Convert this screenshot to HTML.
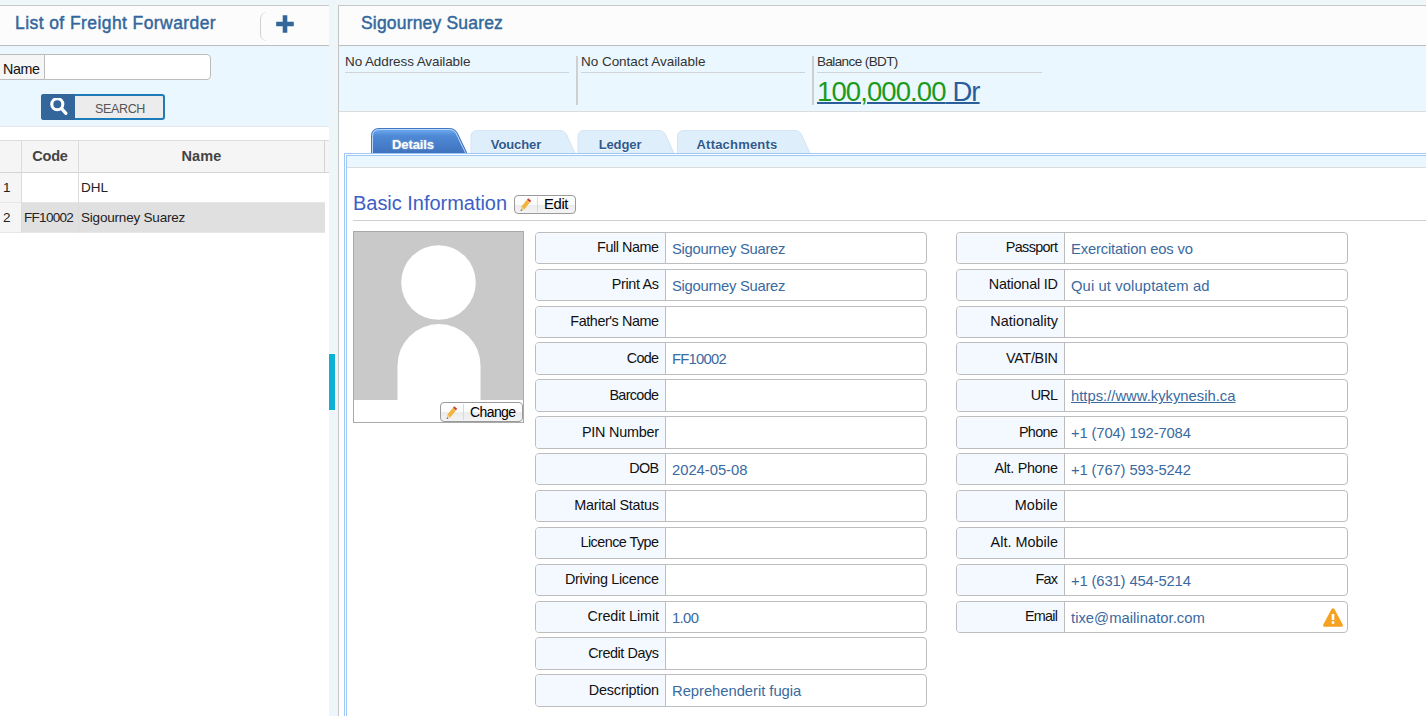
<!DOCTYPE html>
<html>
<head>
<meta charset="utf-8">
<title>Freight Forwarder</title>
<style>
*{box-sizing:border-box;margin:0;padding:0}
html,body{width:1426px;height:716px;overflow:hidden;background:#eff6fa;font-family:"Liberation Sans",sans-serif;font-size:14px;color:#222}
.abs{position:absolute}
#left{position:absolute;left:0;top:5px;width:329px;height:711px;background:#fff;border-top:1px solid #c8c8c8}
#right{position:absolute;left:338px;top:5px;width:1100px;height:711px;background:#fff;border-top:1px solid #c8c8c8;border-left:1px solid #c4c4c4}
.hdr{position:absolute;left:0;top:0;right:0;height:40px;border-bottom:1px solid #bdbdbd;background:#fcfcfc}
.title{position:absolute;color:#33679b;font-size:17.5px;white-space:nowrap;-webkit-text-stroke:0.45px #33679b;letter-spacing:0.42px}
.blue{position:absolute;left:0;right:0;background:#ebf7fe}
.t{position:absolute;white-space:nowrap;line-height:1}
.th{text-align:center;font-weight:bold;font-size:14.5px;letter-spacing:-0.2px;color:#444}
.td{font-size:13.5px;color:#222}
.row{position:absolute;border:1px solid #bdbdbd;border-radius:4px;background:#fff;overflow:hidden}
.lab{position:absolute;left:0;top:0;bottom:0;background:#f4f9ff;border-right:1px solid #bdbdbd;display:flex;align-items:center;justify-content:flex-end;padding-right:6px;padding-bottom:1.400px;font-size:14.4px;letter-spacing:-0.3px;line-height:normal;color:#111;white-space:nowrap}
.val{position:absolute;top:0;bottom:0;display:flex;align-items:center;padding-top:1.900px;font-size:14.800px;letter-spacing:-0.27px;line-height:normal;color:#3a6a9f;white-space:nowrap}
.url{text-decoration:underline}
.btn{position:absolute;border:1px solid #9a9a9a;border-radius:4px;background:linear-gradient(#ffffff 0%,#fbfbfb 50%,#ececec 52%,#f3f3f3 100%)}
.inf{font-size:13.5px;color:#333}
.tab{font-size:13px;font-weight:bold;color:#2e5a8e;text-align:center;letter-spacing:-0.1px;text-shadow:0 1px 0 #fff}
</style>
</head>
<body>

<!-- LEFT PANEL -->
<div id="left">
  <div class="hdr">
    <div class="title" style="left:15px;top:7px">List of Freight Forwarder</div>
    <div class="abs" style="left:260px;top:6px;width:60px;height:29px;border-left:1px solid #d0d0d0;border-radius:7px 0 0 7px"></div>
    <svg class="abs" style="left:275px;top:8px" width="20" height="20" viewBox="0 0 20 20"><path d="M7.700 1.200h4.600v6.500h6.500v4.600h-6.500v6.500H7.700v-6.500H1.200V7.700h6.500z" fill="#33679b"/></svg>
  </div>
  <div class="blue" style="top:40px;height:81px;border-bottom:1px solid #e3e9ee"></div>
  <div class="abs" style="left:-1px;top:48px;width:46px;height:26px;background:#f6f6f6;border:1px solid #bcbcbc"></div>
  <div class="t" style="left:3px;top:56px;font-size:14.300px;letter-spacing:-0.4px;color:#111">Name</div>
  <div class="abs" style="left:44px;top:48px;width:167px;height:26px;background:#fff;border:1px solid #bcbcbc;border-radius:0 4px 4px 0"></div>
  <!-- search button -->
  <div class="abs" style="left:41px;top:88px;width:124px;height:26px;background:#ececec;border:2px solid #1d7cb8;border-radius:3px"></div>
  <div class="abs" style="left:41px;top:88px;width:34px;height:26px;background:#33679b;border-radius:3px 0 0 3px"></div>
  <svg class="abs" style="left:49px;top:92px" width="20" height="20" viewBox="0 0 20 20"><circle cx="8.300" cy="6.200" r="5.500" fill="none" stroke="#fff" stroke-width="3.100"/><path d="M12.600 10.600l4.300 4.700" stroke="#fff" stroke-width="3.300" stroke-linecap="round"/></svg>
  <div class="t" style="left:95px;top:97px;font-size:12.5px;color:#555;letter-spacing:-0.35px">SEARCH</div>

  <!-- table -->
  <div class="abs" style="left:0;top:134px;width:329px;height:33px;background:#f5f5f5;border-top:1px solid #dcdcdc;border-bottom:1px solid #d4d4d4"></div>
  <div class="abs" style="left:0;top:167px;width:22px;height:60px;background:#f5f5f5"></div>
  <div class="abs" style="left:22px;top:197px;width:303px;height:30px;background:#e0e0e0"></div>
  <div class="abs" style="left:0;top:196px;width:325px;height:1px;background:#e6e6e6"></div>
  <div class="abs" style="left:0;top:226px;width:325px;height:1px;background:#e6e6e6"></div>
  <div class="abs" style="left:21px;top:135px;width:1px;height:92px;background:#dcdcdc"></div>
  <div class="abs" style="left:78px;top:135px;width:1px;height:92px;background:#dcdcdc"></div>
  <div class="abs" style="left:324px;top:135px;width:1px;height:32px;background:#d4d4d4"></div>
  <div class="t th" style="left:22px;width:56px;top:143px">Code</div>
  <div class="t th" style="left:79px;width:245px;top:143px;letter-spacing:0.15px">Name</div>
  <div class="t td" style="left:3px;top:175px">1</div>
  <div class="t td" style="left:81px;top:175px">DHL</div>
  <div class="t td" style="left:3px;top:205px">2</div>
  <div class="t td" style="left:24px;top:205px;letter-spacing:-0.7px">FF10002</div>
  <div class="t td" style="left:81px;top:205px;letter-spacing:-0.2px">Sigourney Suarez</div>
</div>

<!-- RIGHT PANEL -->
<div id="right">
  <div class="hdr">
    <div class="title" style="left:22px;top:7px;letter-spacing:0.18px">Sigourney Suarez</div>
  </div>
  <div class="blue" style="top:40px;height:66px;border-bottom:1px solid #dcdcdc"></div>

  <!-- info strip (coords relative to #right: x-339, y-6) -->
  <div class="t inf" style="left:6px;top:49px;letter-spacing:-0.1px">No Address Available</div>
  <div class="abs" style="left:6px;top:66px;width:224px;height:1px;background:#cfd4d8"></div>
  <div class="abs" style="left:237px;top:50px;width:2px;height:49px;background:#cfcfcf"></div>
  <div class="t inf" style="left:242px;top:49px;letter-spacing:-0.03px">No Contact Available</div>
  <div class="abs" style="left:242px;top:66px;width:224px;height:1px;background:#cfd4d8"></div>
  <div class="abs" style="left:473px;top:50px;width:2px;height:49px;background:#cfcfcf"></div>
  <div class="t inf" style="left:478px;top:49px;letter-spacing:-0.6px">Balance (BDT)</div>
  <div class="abs" style="left:478px;top:66px;width:225px;height:1px;background:#cfd4d8"></div>
  <div class="t" style="left:478px;top:72px;font-size:27.5px;color:#2a5d9c;text-decoration:underline;text-decoration-thickness:1.600px;text-underline-offset:1px;letter-spacing:-0.9px"><span style="color:#1c9a1c">100,000.00</span> Dr</div>

  <!-- tabs -->
  <svg class="abs" style="left:30px;top:118px" width="450" height="32" viewBox="0 0 450 32">
    <defs>
      <linearGradient id="ga" x1="0" y1="0" x2="0" y2="1"><stop offset="0" stop-color="#72aef2"/><stop offset="0.3" stop-color="#4f89d6"/><stop offset="1" stop-color="#3f72bd"/></linearGradient>
    </defs>
    <!-- inactive tabs -->
    <path d="M102 29.500V13q0-6.500 6.500-6.500H190.500q5 0 7.300 4.500l8.200 18.500z" fill="#dfeefb" stroke="#d3e4f4" stroke-width="1"/>
    <path d="M209 29.500V13q0-6.500 6.500-6.500H289.500q5 0 7.300 4.500l8.200 18.500z" fill="#dfeefb" stroke="#d3e4f4" stroke-width="1"/>
    <path d="M308.500 29.500V13q0-6.500 6.500-6.500H425.500q5 0 7.300 4.500l8.200 18.500z" fill="#dfeefb" stroke="#d3e4f4" stroke-width="1"/>
    <!-- active -->
    <path d="M2.500 29.500V12q0-7.500 7.500-7.500H80.500q5.500 0 8 5l9.500 20z" fill="url(#ga)" stroke="#4179c2" stroke-width="1"/>
    <path d="M3.500 29.500V12.500q0-7 7-7H80.500q4.500 0 6.800 4.300l9.500 19.700" fill="none" stroke="#b9d8fb" stroke-width="1"/>
  </svg>
  <div class="t tab" style="left:32px;width:84px;top:132px;color:#fff;text-shadow:0 0 2px #fff8">Details</div>
  <div class="t tab" style="left:131px;width:92px;top:132px">Voucher</div>
  <div class="t tab" style="left:239px;width:84px;top:132px">Ledger</div>
  <div class="t tab" style="left:338px;width:120px;top:132px;letter-spacing:0.2px">Attachments</div>

  <!-- tab body -->
  <div class="abs" style="left:5px;top:147px;width:1100px;height:600px;border:1px solid #a0c8f7;background:#fff"></div>
  <div class="abs" style="left:7px;top:149px;width:1100px;height:600px;border:1px solid #a0c8f7;background:#fff"></div>
  <div class="abs" style="left:8px;top:150px;width:1100px;height:12px;background:#ebf7fe;border-bottom:1px solid #dcdcdc"></div>

  <div class="t" style="left:14px;top:187px;font-size:20px;color:#3c60c4;letter-spacing:-0.03px">Basic Information</div>
  <div class="abs" style="left:14px;top:214px;width:1100px;height:1px;background:#cfcfcf"></div>

  <!-- form rows -->
  <div class="row" style="left:196px;top:226px;height:32px;width:392px"><div class="lab" style="width:130px;letter-spacing:-0.46px;padding-right:6.46px">Full Name</div><div class="val" style="left:136px;letter-spacing:-0.28px">Sigourney Suarez</div></div>
  <div class="row" style="left:196px;top:263px;height:32px;width:392px"><div class="lab" style="width:130px;letter-spacing:-0.34px;padding-right:6.34px">Print As</div><div class="val" style="left:136px;letter-spacing:-0.28px">Sigourney Suarez</div></div>
  <div class="row" style="left:196px;top:300px;height:32px;width:392px"><div class="lab" style="width:130px;letter-spacing:-0.44px;padding-right:6.44px">Father's Name</div></div>
  <div class="row" style="left:196px;top:336px;height:33px;width:392px"><div class="lab" style="width:130px;letter-spacing:-0.75px;padding-right:6.75px">Code</div><div class="val" style="left:136px;letter-spacing:-0.75px">FF10002</div></div>
  <div class="row" style="left:196px;top:373px;height:33px;width:392px"><div class="lab" style="width:130px;letter-spacing:-0.67px;padding-right:6.67px">Barcode</div></div>
  <div class="row" style="left:196px;top:410px;height:33px;width:392px"><div class="lab" style="width:130px;letter-spacing:-0.24px;padding-right:6.24px">PIN Number</div></div>
  <div class="row" style="left:196px;top:447px;height:32px;width:392px"><div class="lab" style="width:130px;letter-spacing:-0.75px;padding-right:6.75px">DOB</div><div class="val" style="left:136px;letter-spacing:-0.03px">2024-05-08</div></div>
  <div class="row" style="left:196px;top:484px;height:32px;width:392px"><div class="lab" style="width:130px;letter-spacing:-0.25px;padding-right:6.25px">Marital Status</div></div>
  <div class="row" style="left:196px;top:521px;height:32px;width:392px"><div class="lab" style="width:130px;letter-spacing:-0.55px;padding-right:6.55px">Licence Type</div></div>
  <div class="row" style="left:196px;top:558px;height:32px;width:392px"><div class="lab" style="width:130px;letter-spacing:-0.31px;padding-right:6.31px">Driving Licence</div></div>
  <div class="row" style="left:196px;top:595px;height:32px;width:392px"><div class="lab" style="width:130px;letter-spacing:-0.11px;padding-right:6.11px">Credit Limit</div><div class="val" style="left:136px;letter-spacing:-0.64px">1.00</div></div>
  <div class="row" style="left:196px;top:631px;height:33px;width:392px"><div class="lab" style="width:130px;letter-spacing:-0.43px;padding-right:6.43px">Credit Days</div></div>
  <div class="row" style="left:196px;top:668px;height:33px;width:392px"><div class="lab" style="width:130px;letter-spacing:-0.18px;padding-right:6.18px">Description</div><div class="val" style="left:136px;letter-spacing:-0.04px">Reprehenderit fugia</div></div>
  <div class="row" style="left:617px;top:226px;height:32px;width:392px"><div class="lab" style="width:108px;letter-spacing:-0.66px;padding-right:6.66px">Passport</div><div class="val" style="left:114px;letter-spacing:-0.17px">Exercitation eos vo</div></div>
  <div class="row" style="left:617px;top:263px;height:32px;width:392px"><div class="lab" style="width:108px;letter-spacing:-0.19px;padding-right:6.19px">National ID</div><div class="val" style="left:114px;letter-spacing:0.1px">Qui ut voluptatem ad</div></div>
  <div class="row" style="left:617px;top:300px;height:32px;width:392px"><div class="lab" style="width:108px;letter-spacing:0.04px;padding-right:6px">Nationality</div></div>
  <div class="row" style="left:617px;top:336px;height:33px;width:392px"><div class="lab" style="width:108px;letter-spacing:-0.3px;padding-right:6.3px">VAT/BIN</div></div>
  <div class="row" style="left:617px;top:373px;height:33px;width:392px"><div class="lab" style="width:108px;letter-spacing:-0.75px;padding-right:6.75px">URL</div><div class="val url" style="left:114px;letter-spacing:-0.0px">https://www.kykynesih.ca</div></div>
  <div class="row" style="left:617px;top:410px;height:33px;width:392px"><div class="lab" style="width:108px;letter-spacing:-0.63px;padding-right:6.63px">Phone</div><div class="val" style="left:114px;letter-spacing:-0.14px">+1 (704) 192-7084</div></div>
  <div class="row" style="left:617px;top:447px;height:32px;width:392px"><div class="lab" style="width:108px;letter-spacing:-0.31px;padding-right:6.31px">Alt. Phone</div><div class="val" style="left:114px;letter-spacing:-0.14px">+1 (767) 593-5242</div></div>
  <div class="row" style="left:617px;top:484px;height:32px;width:392px"><div class="lab" style="width:108px;letter-spacing:0.16px;padding-right:6px">Mobile</div></div>
  <div class="row" style="left:617px;top:521px;height:32px;width:392px"><div class="lab" style="width:108px;letter-spacing:0.02px;padding-right:6px">Alt. Mobile</div></div>
  <div class="row" style="left:617px;top:558px;height:32px;width:392px"><div class="lab" style="width:108px;letter-spacing:-0.75px;padding-right:6.75px">Fax</div><div class="val" style="left:114px;letter-spacing:-0.14px">+1 (631) 454-5214</div></div>
  <div class="row" style="left:617px;top:595px;height:32px;width:392px"><div class="lab" style="width:108px;letter-spacing:-0.75px;padding-right:6.75px">Email</div><div class="val" style="left:114px;letter-spacing:0.02px">tixe@mailinator.com</div></div>

  <!-- edit button -->
  <div class="btn" style="left:175px;top:189px;width:62px;height:19px"></div>
  <div class="abs" style="left:198px;top:191px;width:1px;height:15px;background:#d9d9d9"></div>
  <svg class="abs pen" style="left:180px;top:191px" width="14" height="15" viewBox="0 0 14 15"><path d="M9.200 1.200l3 2.600-1.300 1.700-3-2.600z" fill="#c8413b"/><path d="M7.700 3.100l3 2.600-5.400 6.700-3-2.600z" fill="#f2b53c"/><path d="M2.300 9.800l3 2.600-3.700 1.500z" fill="#e8d2a8"/><path d="M1.600 13.900l.5-1.600 1.200 1z" fill="#444"/></svg>
  <div class="t" style="left:205px;top:191px;font-size:14.800px;color:#000;letter-spacing:-0.35px">Edit</div>

  <!-- photo -->
  <div class="abs" style="left:14px;top:225px;width:171px;height:192px;border:1px solid #a9a9a9;background:#fff"></div>
  <svg class="abs" style="left:15px;top:226px" width="169" height="168" viewBox="0 0 169 168"><rect width="169" height="168" fill="#c9c9c9"/><circle cx="84.500" cy="50.500" r="37.300" fill="#fff"/><path d="M43.500 168v-34.500a41.500 41.500 0 0 1 83 0v34.500z" fill="#fff"/></svg>
  <div class="btn" style="left:101px;top:396px;width:83px;height:20px"></div>
  <div class="abs" style="left:124px;top:398px;width:1px;height:16px;background:#d9d9d9"></div>
  <svg class="abs pen" style="left:106px;top:399px" width="14" height="15" viewBox="0 0 14 15"><path d="M9.200 1.200l3 2.600-1.300 1.700-3-2.600z" fill="#c8413b"/><path d="M7.700 3.100l3 2.600-5.400 6.700-3-2.600z" fill="#f2b53c"/><path d="M2.300 9.800l3 2.600-3.700 1.500z" fill="#e8d2a8"/><path d="M1.600 13.900l.5-1.600 1.200 1z" fill="#444"/></svg>
  <div class="t" style="left:131px;top:399px;font-size:14px;color:#000;letter-spacing:-0.6px">Change</div>

  <!-- warning icon -->
  <svg class="abs" style="left:983.300px;top:600.600px" width="22" height="20" viewBox="0 0 22 20"><path d="M11 1.200q.9 0 1.400.9l8.300 15.500q.5 1-.1 1.600-.4.500-1.300.5H2.700q-.9 0-1.300-.5-.6-.6-.1-1.600L9.600 2.100q.5-.9 1.400-.9z" fill="#f5a122"/><rect x="9.700" y="7" width="2.600" height="6" fill="#fff"/><rect x="9.700" y="14.300" width="2.600" height="2.500" fill="#fff"/></svg>
</div>

<!-- splitter handle -->
<div class="abs" style="left:329px;top:354px;width:6px;height:56px;background:#0db0d6;box-shadow:0 0 0 1px rgba(255,255,255,.6)"></div>

</body>
</html>
